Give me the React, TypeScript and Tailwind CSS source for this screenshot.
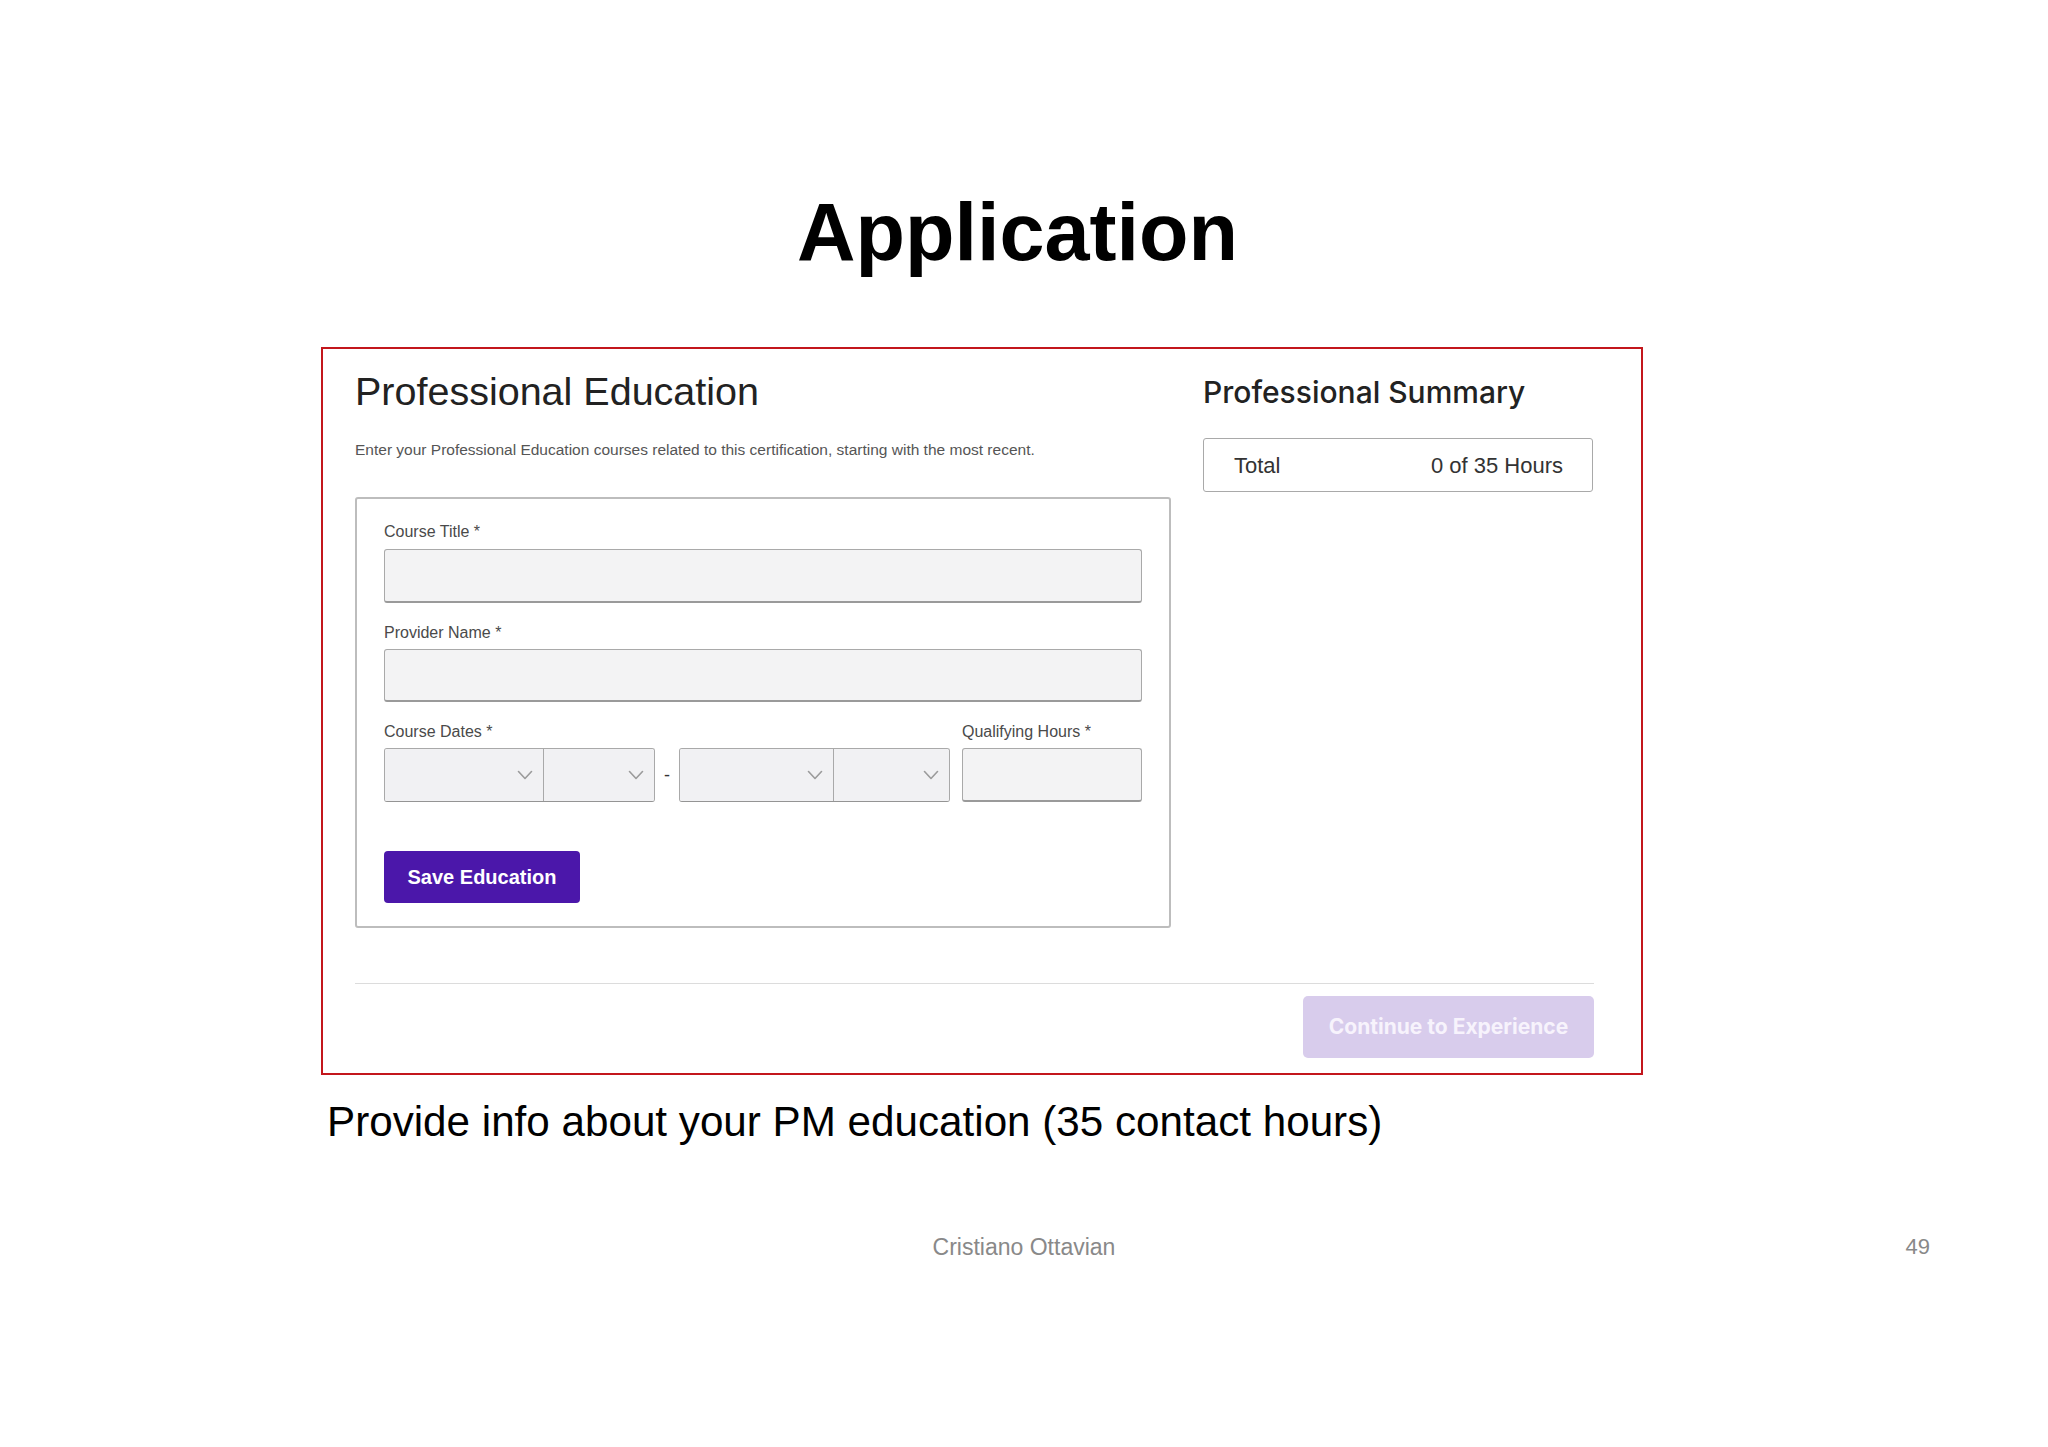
import React from "react";

const Chevron = () => (
  <svg width="16" height="10" viewBox="0 0 16 10" fill="none" className="shrink-0">
    <path d="M1.5 1.5 8 8.5l6.5-7" stroke="#9b9b9b" strokeWidth="1.6" strokeLinecap="round" strokeLinejoin="round" />
  </svg>
);

const SelectBox = ({ className = "" }: { className?: string }) => (
  <div className={`flex h-full items-center justify-end bg-[#f1f1f3] pr-[10px] ${className}`}>
    <Chevron />
  </div>
);

const DateGroup = ({ first }: { first: string }) => (
  <div className="flex h-[54px] w-[271px] overflow-hidden rounded-[3px] border border-[#a9a9a9] border-b-[#949494]">
    <SelectBox className={first} />
    <SelectBox className="flex-1 border-l border-[#a9a9a9]" />
  </div>
);

const Label = ({ children }: { children: React.ReactNode }) => (
  <div className="text-[16px] leading-[20px] text-[#4a4a4a]">{children}</div>
);

const TextInput = ({ h }: { h: string }) => (
  <div className={`w-full rounded-[3px] border border-[#a9a9a9] border-b-2 border-b-[#9a9a9a] bg-[#f3f3f4] ${h}`} />
);

export default function App() {
  return (
    <div className="min-h-[1447px] w-full bg-white font-['Liberation_Sans',Arial,sans-serif]">
      {/* Slide title */}
      <h1 className="pt-[192px] pr-[13px] text-center text-[81px] leading-[81px] font-bold text-black">
        Application
      </h1>

      {/* Screenshot frame */}
      <div className="ml-[321px] mt-[74px] w-[1322px] border-2 border-[#c3161c] pt-[15px] pb-[15px] pl-[32px] pr-[47px]">
        <div className="flex">
          {/* Left: education form */}
          <div className="w-[816px]">
            <h2 className="pt-[3px] text-[39.5px] leading-[48px] text-[#222]">Professional Education</h2>
            <p className="mt-[25px] text-[15.5px] leading-[20px] text-[#555]">
              Enter your Professional Education courses related to this certification, starting with the most recent.
            </p>

            <div className="mt-[37px] rounded-[3px] border-2 border-[#bdbdbd] px-[27px] pt-[23px] pb-[23px]">
              <Label>Course Title *</Label>
              <div className="mt-[7px]">
                <TextInput h="h-[54px]" />
              </div>

              <div className="mt-[20px]">
                <Label>Provider Name *</Label>
              </div>
              <div className="mt-[6px]">
                <TextInput h="h-[53px]" />
              </div>

              <div className="mt-[20px] flex">
                <div>
                  <Label>Course Dates *</Label>
                  <div className="mt-[6px] flex items-center">
                    <DateGroup first="w-[158px]" />
                    <div className="flex w-[24px] justify-center text-[18px] text-[#333]">-</div>
                    <DateGroup first="w-[153px]" />
                  </div>
                </div>
                <div className="ml-[12px] flex-1">
                  <Label>Qualifying Hours *</Label>
                  <div className="mt-[6px]">
                    <TextInput h="h-[54px]" />
                  </div>
                </div>
              </div>

              <button className="mt-[49px] flex h-[52px] w-[196px] items-center justify-center rounded-[4px] bg-[#4b17aa] text-[20px] font-bold text-white">
                Save Education
              </button>
            </div>
          </div>

          {/* Right: summary */}
          <div className="ml-[32px] w-[390px] pt-[10px]">
            <h2 className="font-['Inter',sans-serif] text-[30px] leading-[36px] font-medium text-[#222]">
              Professional Summary
            </h2>
            <div className="mt-[28px] flex h-[54px] items-center justify-between rounded-[3px] border border-[#a9a9a9] pl-[30px] pr-[29px] text-[22px] text-[#333]">
              <span>Total</span>
              <span>0 of 35 Hours</span>
            </div>
          </div>
        </div>

        <div className="mt-[55px] border-t border-[#dcdcdc]" />
        <div className="mt-[12px] flex justify-end">
          <button className="flex h-[62px] w-[291px] items-center justify-center rounded-[5px] bg-[#d8ccec] font-['Inter',sans-serif] text-[21px] font-bold text-[#f7f3fc]">
            Continue to Experience
          </button>
        </div>
      </div>

      {/* Caption */}
      <p className="ml-[327px] mt-[22px] text-[42.2px] leading-[50px] text-black">
        Provide info about your PM education (35 contact hours)
      </p>

      {/* Footer */}
      <div className="mt-[86px] grid grid-cols-3 text-[22px] leading-[28px] text-[#898989]">
        <div />
        <div className="text-center text-[23px]">Cristiano Ottavian</div>
        <div className="pr-[118px] text-right">49</div>
      </div>
    </div>
  );
}
